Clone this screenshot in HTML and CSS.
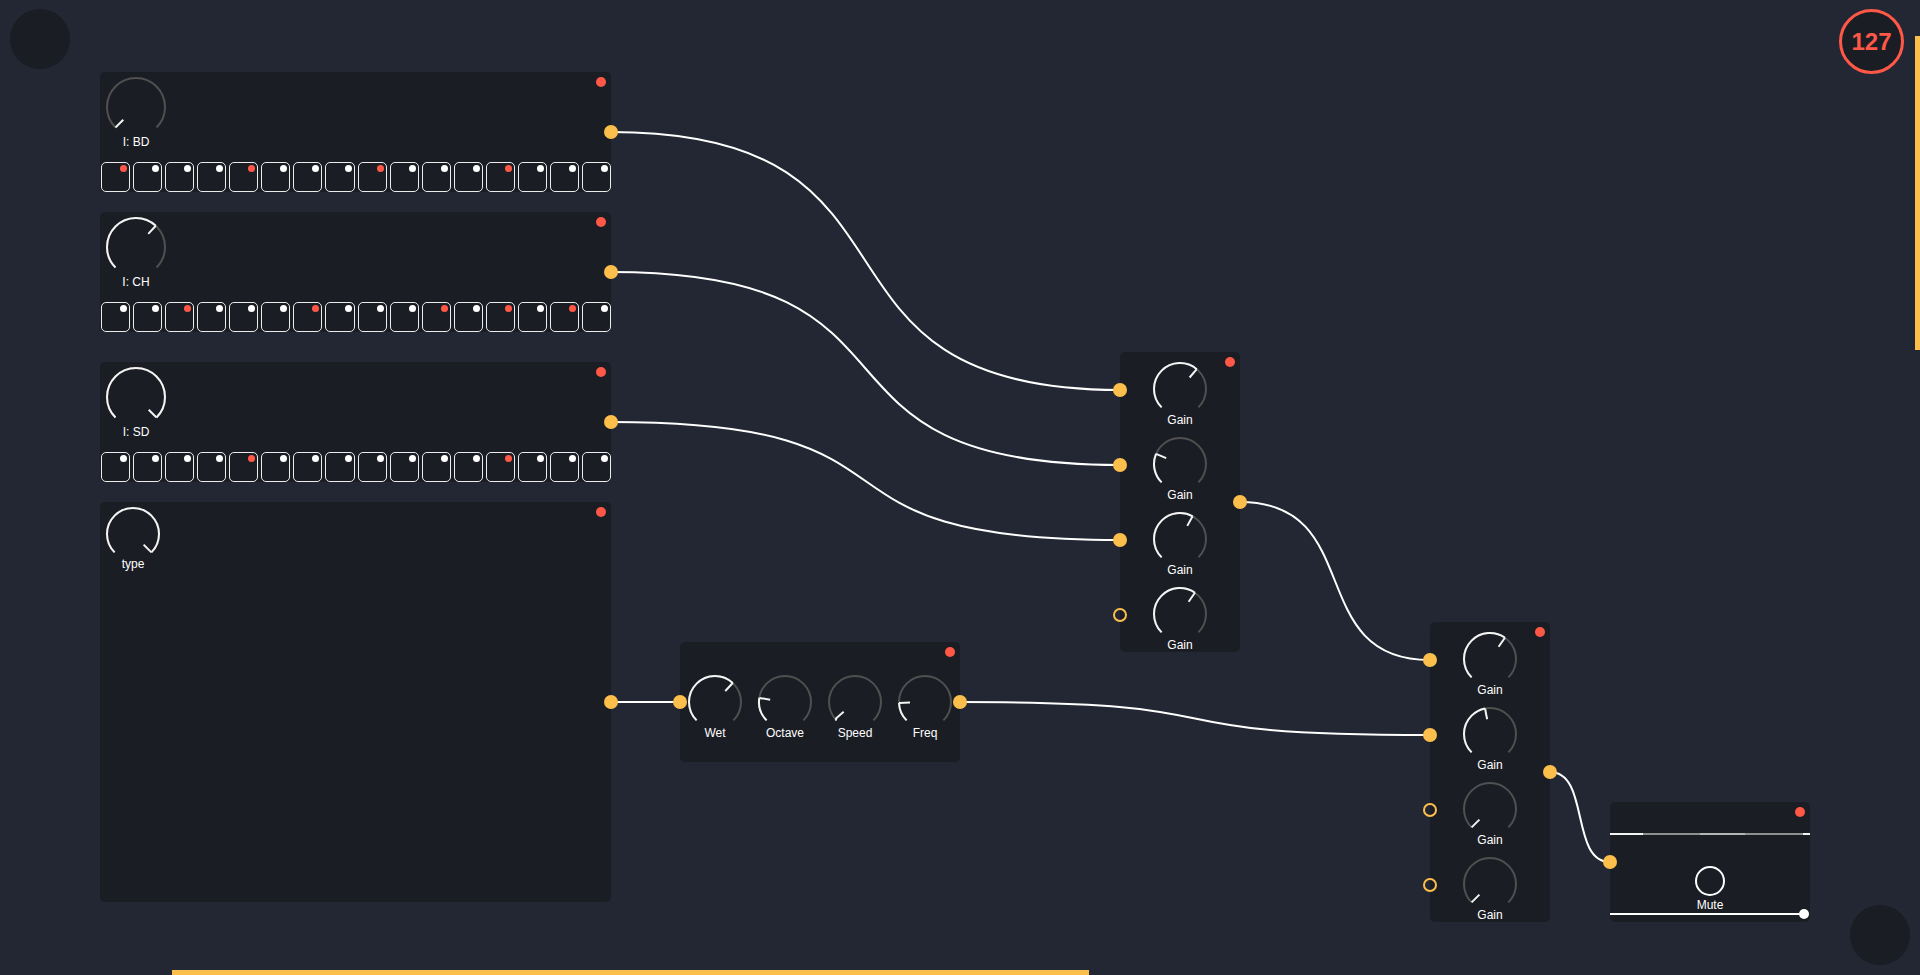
FILE: index.html
```html
<!DOCTYPE html>
<html lang="en">
<head>
    <meta charset="UTF-8">
    <meta name="viewport" content="width=device-width, initial-scale=1.0">
    <title>Patch</title>
    <link rel="stylesheet" href="styles.css">
</head>
<body>
    <div class="canvas">
        <!-- cables -->
        <svg class="wires" width="1920" height="975" viewBox="0 0 1920 975">
            <path d="M611 132 C952 132 779 390 1120 390"/>
            <path d="M611 272 C952 272 779 465 1120 465"/>
            <path d="M611 422 C952 422 779 540 1120 540"/>
            <path d="M611 702 L680 702"/>
            <path d="M960 702 C1275 702 1115 735 1430 735"/>
            <path d="M1240 502 C1367 502 1303 660 1430 660"/>
            <path d="M1550 772 C1590 772 1570 862 1610 862"/>
        </svg>

        <div class="fab fab-tl"></div>
        <div class="fab fab-br"></div>
        <div class="counter">127</div>
        <div class="vbar"></div>
        <div class="hbar"></div>

        <!-- sequencer: BD -->
        <div class="node seq n-bd">
            <span class="led"></span>
            <div class="knob big">
                <svg class="dial" viewBox="0 0 62 62">
                    <circle class="track" cx="31" cy="31" r="29" pathLength="360" transform="rotate(135 31 31)"/>
                    <line class="tick" x1="31" y1="13" x2="31" y2="2" transform="rotate(-135 31 31)"/>
                </svg>
                <span class="label">I: BD</span>
            </div>
            <div class="steps">
                <span class="step on"></span><span class="step"></span><span class="step"></span><span class="step"></span>
                <span class="step on"></span><span class="step"></span><span class="step"></span><span class="step"></span>
                <span class="step on"></span><span class="step"></span><span class="step"></span><span class="step"></span>
                <span class="step on"></span><span class="step"></span><span class="step"></span><span class="step"></span>
            </div>
            <span class="port out"></span>
        </div>

        <!-- sequencer: CH -->
        <div class="node seq n-ch">
            <span class="led"></span>
            <div class="knob big">
                <svg class="dial" viewBox="0 0 62 62">
                    <circle class="track" cx="31" cy="31" r="29" pathLength="360" transform="rotate(135 31 31)"/>
                    <circle class="value" cx="31" cy="31" r="29" pathLength="360" stroke-dasharray="178 360" transform="rotate(135 31 31)"/>
                    <line class="tick" x1="31" y1="13" x2="31" y2="2" transform="rotate(43 31 31)"/>
                </svg>
                <span class="label">I: CH</span>
            </div>
            <div class="steps">
                <span class="step"></span><span class="step"></span><span class="step on"></span><span class="step"></span>
                <span class="step"></span><span class="step"></span><span class="step on"></span><span class="step"></span>
                <span class="step"></span><span class="step"></span><span class="step on"></span><span class="step"></span>
                <span class="step on"></span><span class="step"></span><span class="step on"></span><span class="step"></span>
            </div>
            <span class="port out"></span>
        </div>

        <!-- sequencer: SD -->
        <div class="node seq n-sd">
            <span class="led"></span>
            <div class="knob big">
                <svg class="dial" viewBox="0 0 62 62">
                    <circle class="track" cx="31" cy="31" r="29" pathLength="360" transform="rotate(135 31 31)"/>
                    <circle class="value" cx="31" cy="31" r="29" pathLength="360" stroke-dasharray="270 360" transform="rotate(135 31 31)"/>
                    <line class="tick" x1="31" y1="13" x2="31" y2="2" transform="rotate(135 31 31)"/>
                </svg>
                <span class="label">I: SD</span>
            </div>
            <div class="steps">
                <span class="step"></span><span class="step"></span><span class="step"></span><span class="step"></span>
                <span class="step on"></span><span class="step"></span><span class="step"></span><span class="step"></span>
                <span class="step"></span><span class="step"></span><span class="step"></span><span class="step"></span>
                <span class="step on"></span><span class="step"></span><span class="step"></span><span class="step"></span>
            </div>
            <span class="port out"></span>
        </div>

        <!-- oscillator -->
        <div class="node osc n-type">
            <span class="led"></span>
            <div class="knob type-knob">
                <svg class="dial" viewBox="0 0 56 56">
                    <circle class="track" cx="28" cy="28" r="26" pathLength="360" transform="rotate(135 28 28)"/>
                    <circle class="value" cx="28" cy="28" r="26" pathLength="360" stroke-dasharray="270 360" transform="rotate(135 28 28)"/>
                    <line class="tick" x1="28" y1="13" x2="28" y2="2" transform="rotate(135 28 28)"/>
                </svg>
                <span class="label">type</span>
            </div>
            <span class="port out"></span>
        </div>

        <!-- effect -->
        <div class="node fx n-delay">
            <span class="led"></span>
            <span class="port in"></span>
            <div class="cell">
                <div class="knob">
                    <svg class="dial" viewBox="0 0 56 56">
                        <circle class="track" cx="28" cy="28" r="26" pathLength="360" transform="rotate(135 28 28)"/>
                        <circle class="value" cx="28" cy="28" r="26" pathLength="360" stroke-dasharray="178 360" transform="rotate(135 28 28)"/>
                        <line class="tick" x1="28" y1="13" x2="28" y2="2" transform="rotate(43 28 28)"/>
                    </svg>
                    <span class="label">Wet</span>
                </div>
            </div>
            <div class="cell">
                <div class="knob">
                    <svg class="dial" viewBox="0 0 56 56">
                        <circle class="track" cx="28" cy="28" r="26" pathLength="360" transform="rotate(135 28 28)"/>
                        <circle class="value" cx="28" cy="28" r="26" pathLength="360" stroke-dasharray="54 360" transform="rotate(135 28 28)"/>
                        <line class="tick" x1="28" y1="13" x2="28" y2="2" transform="rotate(-81 28 28)"/>
                    </svg>
                    <span class="label">Octave</span>
                </div>
            </div>
            <div class="cell">
                <div class="knob">
                    <svg class="dial" viewBox="0 0 56 56">
                        <circle class="track" cx="28" cy="28" r="26" pathLength="360" transform="rotate(135 28 28)"/>
                        <circle class="value" cx="28" cy="28" r="26" pathLength="360" stroke-dasharray="4 360" transform="rotate(135 28 28)"/>
                        <line class="tick" x1="28" y1="13" x2="28" y2="2" transform="rotate(-131 28 28)"/>
                    </svg>
                    <span class="label">Speed</span>
                </div>
            </div>
            <div class="cell">
                <div class="knob">
                    <svg class="dial" viewBox="0 0 56 56">
                        <circle class="track" cx="28" cy="28" r="26" pathLength="360" transform="rotate(135 28 28)"/>
                        <circle class="value" cx="28" cy="28" r="26" pathLength="360" stroke-dasharray="43 360" transform="rotate(135 28 28)"/>
                        <line class="tick" x1="28" y1="13" x2="28" y2="2" transform="rotate(-92 28 28)"/>
                    </svg>
                    <span class="label">Freq</span>
                </div>
            </div>
            <span class="port out"></span>
        </div>

        <!-- mixer 1 -->
        <div class="node mixer n-mix1">
            <span class="led"></span>
            <div class="ch">
                <span class="port in"></span>
                <div class="knob">
                    <svg class="dial" viewBox="0 0 56 56">
                        <circle class="track" cx="28" cy="28" r="26" pathLength="360" transform="rotate(135 28 28)"/>
                        <circle class="value" cx="28" cy="28" r="26" pathLength="360" stroke-dasharray="175 360" transform="rotate(135 28 28)"/>
                        <line class="tick" x1="28" y1="13" x2="28" y2="2" transform="rotate(40 28 28)"/>
                    </svg>
                    <span class="label">Gain</span>
                </div>
            </div>
            <div class="ch">
                <span class="port in"></span>
                <div class="knob">
                    <svg class="dial" viewBox="0 0 56 56">
                        <circle class="track" cx="28" cy="28" r="26" pathLength="360" transform="rotate(135 28 28)"/>
                        <circle class="value" cx="28" cy="28" r="26" pathLength="360" stroke-dasharray="68 360" transform="rotate(135 28 28)"/>
                        <line class="tick" x1="28" y1="13" x2="28" y2="2" transform="rotate(-67 28 28)"/>
                    </svg>
                    <span class="label">Gain</span>
                </div>
            </div>
            <div class="ch">
                <span class="port in"></span>
                <div class="knob">
                    <svg class="dial" viewBox="0 0 56 56">
                        <circle class="track" cx="28" cy="28" r="26" pathLength="360" transform="rotate(135 28 28)"/>
                        <circle class="value" cx="28" cy="28" r="26" pathLength="360" stroke-dasharray="164 360" transform="rotate(135 28 28)"/>
                        <line class="tick" x1="28" y1="13" x2="28" y2="2" transform="rotate(29 28 28)"/>
                    </svg>
                    <span class="label">Gain</span>
                </div>
            </div>
            <div class="ch">
                <span class="port in open"></span>
                <div class="knob">
                    <svg class="dial" viewBox="0 0 56 56">
                        <circle class="track" cx="28" cy="28" r="26" pathLength="360" transform="rotate(135 28 28)"/>
                        <circle class="value" cx="28" cy="28" r="26" pathLength="360" stroke-dasharray="170 360" transform="rotate(135 28 28)"/>
                        <line class="tick" x1="28" y1="13" x2="28" y2="2" transform="rotate(35 28 28)"/>
                    </svg>
                    <span class="label">Gain</span>
                </div>
            </div>
            <span class="port out"></span>
        </div>

        <!-- mixer 2 -->
        <div class="node mixer n-mix2">
            <span class="led"></span>
            <div class="ch">
                <span class="port in"></span>
                <div class="knob">
                    <svg class="dial" viewBox="0 0 56 56">
                        <circle class="track" cx="28" cy="28" r="26" pathLength="360" transform="rotate(135 28 28)"/>
                        <circle class="value" cx="28" cy="28" r="26" pathLength="360" stroke-dasharray="170 360" transform="rotate(135 28 28)"/>
                        <line class="tick" x1="28" y1="13" x2="28" y2="2" transform="rotate(35 28 28)"/>
                    </svg>
                    <span class="label">Gain</span>
                </div>
            </div>
            <div class="ch">
                <span class="port in"></span>
                <div class="knob">
                    <svg class="dial" viewBox="0 0 56 56">
                        <circle class="track" cx="28" cy="28" r="26" pathLength="360" transform="rotate(135 28 28)"/>
                        <circle class="value" cx="28" cy="28" r="26" pathLength="360" stroke-dasharray="124 360" transform="rotate(135 28 28)"/>
                        <line class="tick" x1="28" y1="13" x2="28" y2="2" transform="rotate(-11 28 28)"/>
                    </svg>
                    <span class="label">Gain</span>
                </div>
            </div>
            <div class="ch">
                <span class="port in open"></span>
                <div class="knob">
                    <svg class="dial" viewBox="0 0 56 56">
                        <circle class="track" cx="28" cy="28" r="26" pathLength="360" transform="rotate(135 28 28)"/>
                        <line class="tick" x1="28" y1="13" x2="28" y2="2" transform="rotate(-135 28 28)"/>
                    </svg>
                    <span class="label">Gain</span>
                </div>
            </div>
            <div class="ch">
                <span class="port in open"></span>
                <div class="knob">
                    <svg class="dial" viewBox="0 0 56 56">
                        <circle class="track" cx="28" cy="28" r="26" pathLength="360" transform="rotate(135 28 28)"/>
                        <line class="tick" x1="28" y1="13" x2="28" y2="2" transform="rotate(-135 28 28)"/>
                    </svg>
                    <span class="label">Gain</span>
                </div>
            </div>
            <span class="port out"></span>
        </div>

        <!-- output -->
        <div class="node mute n-out">
            <span class="led"></span>
            <span class="port in"></span>
            <div class="scope"></div>
            <div class="toggle"></div>
            <span class="label">Mute</span>
            <div class="slider"></div>
        </div>
    </div>
</body>
</html>
```

FILE: styles.css
```css
body {
    margin: 0;
    background-color: #222733;
    font-family: "Liberation Sans", Arial, sans-serif;
    overflow: hidden;
}
.canvas {
    position: relative;
    width: 1920px;
    height: 975px;
}
.wires {
    position: absolute;
    left: 0;
    top: 0;
}
.wires path {
    fill: none;
    stroke: #fff;
    stroke-width: 2;
}

/* floating bits */
.fab {
    position: absolute;
    width: 60px;
    height: 60px;
    border-radius: 50%;
    background-color: #1b1d24;
}
.fab-tl {
    left: 10px;
    top: 9px;
}
.fab-br {
    left: 1850px;
    top: 905px;
}
.counter {
    position: absolute;
    left: 1839px;
    top: 9px;
    width: 65px;
    height: 65px;
    box-sizing: border-box;
    border: 3px solid #ff5847;
    border-radius: 50%;
    background-color: #1b1d24;
    color: #ff5847;
    font-size: 24px;
    font-weight: bold;
    display: flex;
    align-items: center;
    justify-content: center;
}
.vbar {
    position: absolute;
    left: 1915px;
    top: 36px;
    width: 5px;
    height: 314px;
    background-color: #fdbf4c;
}
.hbar {
    position: absolute;
    left: 172px;
    top: 970px;
    width: 917px;
    height: 5px;
    background-color: #fdbf4c;
}

/* nodes */
.node {
    position: absolute;
    box-sizing: border-box;
    background-color: #1b1d24;
    border-radius: 5px;
}
.n-bd { left: 100px; top: 72px; }
.n-ch { left: 100px; top: 212px; }
.n-sd { left: 100px; top: 362px; }
.n-type { left: 100px; top: 502px; }
.n-delay { left: 680px; top: 642px; }
.n-mix1 { left: 1120px; top: 352px; }
.n-mix2 { left: 1430px; top: 622px; }
.n-out { left: 1610px; top: 802px; }

.led {
    position: absolute;
    top: 5px;
    right: 5px;
    width: 10px;
    height: 10px;
    border-radius: 50%;
    background-color: #ff5847;
}
.port {
    position: absolute;
    width: 14px;
    height: 14px;
    box-sizing: border-box;
    border-radius: 50%;
    background-color: #fdbf4c;
    z-index: 2;
}
.port.out {
    right: -7px;
    top: 50%;
    margin-top: -7px;
}
.port.in {
    left: -7px;
    top: 50%;
    margin-top: -7px;
}
.port.open {
    background-color: transparent;
    border: 2px solid #fdbf4c;
}

/* knobs */
.knob {
    display: flex;
    flex-direction: column;
    align-items: center;
}
.dial {
    width: 56px;
    height: 56px;
}
.dial circle {
    fill: none;
    stroke-width: 2;
}
.dial .track {
    stroke: #505050;
    stroke-dasharray: 270 360;
}
.dial .value {
    stroke: #f4f4f4;
}
.dial .tick {
    stroke: #f4f4f4;
    stroke-width: 2;
}
.label {
    color: #fff;
    font-size: 12px;
    line-height: 14px;
    white-space: nowrap;
    margin-top: -4px;
}
.knob.big .dial {
    width: 62px;
    height: 62px;
}
.knob.big .label {
    margin-top: -3px;
}
.type-knob .label {
    margin-top: -5px;
}

/* sequencer */
.seq {
    width: 511px;
    height: 120px;
    display: flex;
    flex-direction: column;
    align-items: flex-start;
    padding: 4px 0 0 5px;
}
.steps {
    margin-top: auto;
    margin-left: -4px;
    align-self: stretch;
    display: grid;
    grid-template-columns: repeat(16, 1fr);
    gap: 3px;
    height: 30px;
}
.step {
    position: relative;
    border: 1.5px solid #ececec;
    border-radius: 5px;
}
.step::after {
    content: "";
    position: absolute;
    top: 2px;
    right: 2px;
    width: 7px;
    height: 7px;
    border-radius: 50%;
    background-color: #fff;
}
.step.on::after {
    background-color: #ff5847;
}

.osc {
    width: 511px;
    height: 400px;
    padding: 4px 0 0 5px;
    display: flex;
    align-items: flex-start;
}

/* effect */
.fx {
    width: 280px;
    height: 120px;
    display: flex;
    padding-top: 32px;
}
.fx .cell {
    width: 70px;
    display: flex;
    justify-content: center;
}

/* mixers */
.mixer {
    width: 120px;
    height: 300px;
    display: flex;
    flex-direction: column;
}
.ch {
    position: relative;
    height: 75px;
    box-sizing: border-box;
    padding-top: 9px;
    display: flex;
    justify-content: center;
}
.ch .port.in {
    top: 31px;
    margin-top: 0;
}

/* output */
.mute {
    width: 200px;
    height: 120px;
    padding-top: 31px;
    display: flex;
    flex-direction: column;
    align-items: center;
}
.mute .port.in {
    top: 53px;
    margin-top: 0;
}
.scope {
    align-self: stretch;
    height: 2px;
    background: linear-gradient(to right, #f4f4f4 0 16.5%, #8f8f8f 16.5% 45%, #b5b5b5 45% 67.5%, #8f8f8f 67.5% 96.5%, #f4f4f4 96.5% 100%);
}
.toggle {
    margin-top: 31px;
    width: 30px;
    height: 30px;
    box-sizing: border-box;
    border: 2px solid #fff;
    border-radius: 50%;
}
.mute .label {
    margin-top: 2px;
}
.slider {
    position: relative;
    align-self: stretch;
    margin: 1px 6px 0 0;
    height: 2px;
    background-color: #fff;
}
.slider::after {
    content: "";
    position: absolute;
    right: -5px;
    top: -4px;
    width: 10px;
    height: 10px;
    border-radius: 50%;
    background-color: #fff;
}
```
